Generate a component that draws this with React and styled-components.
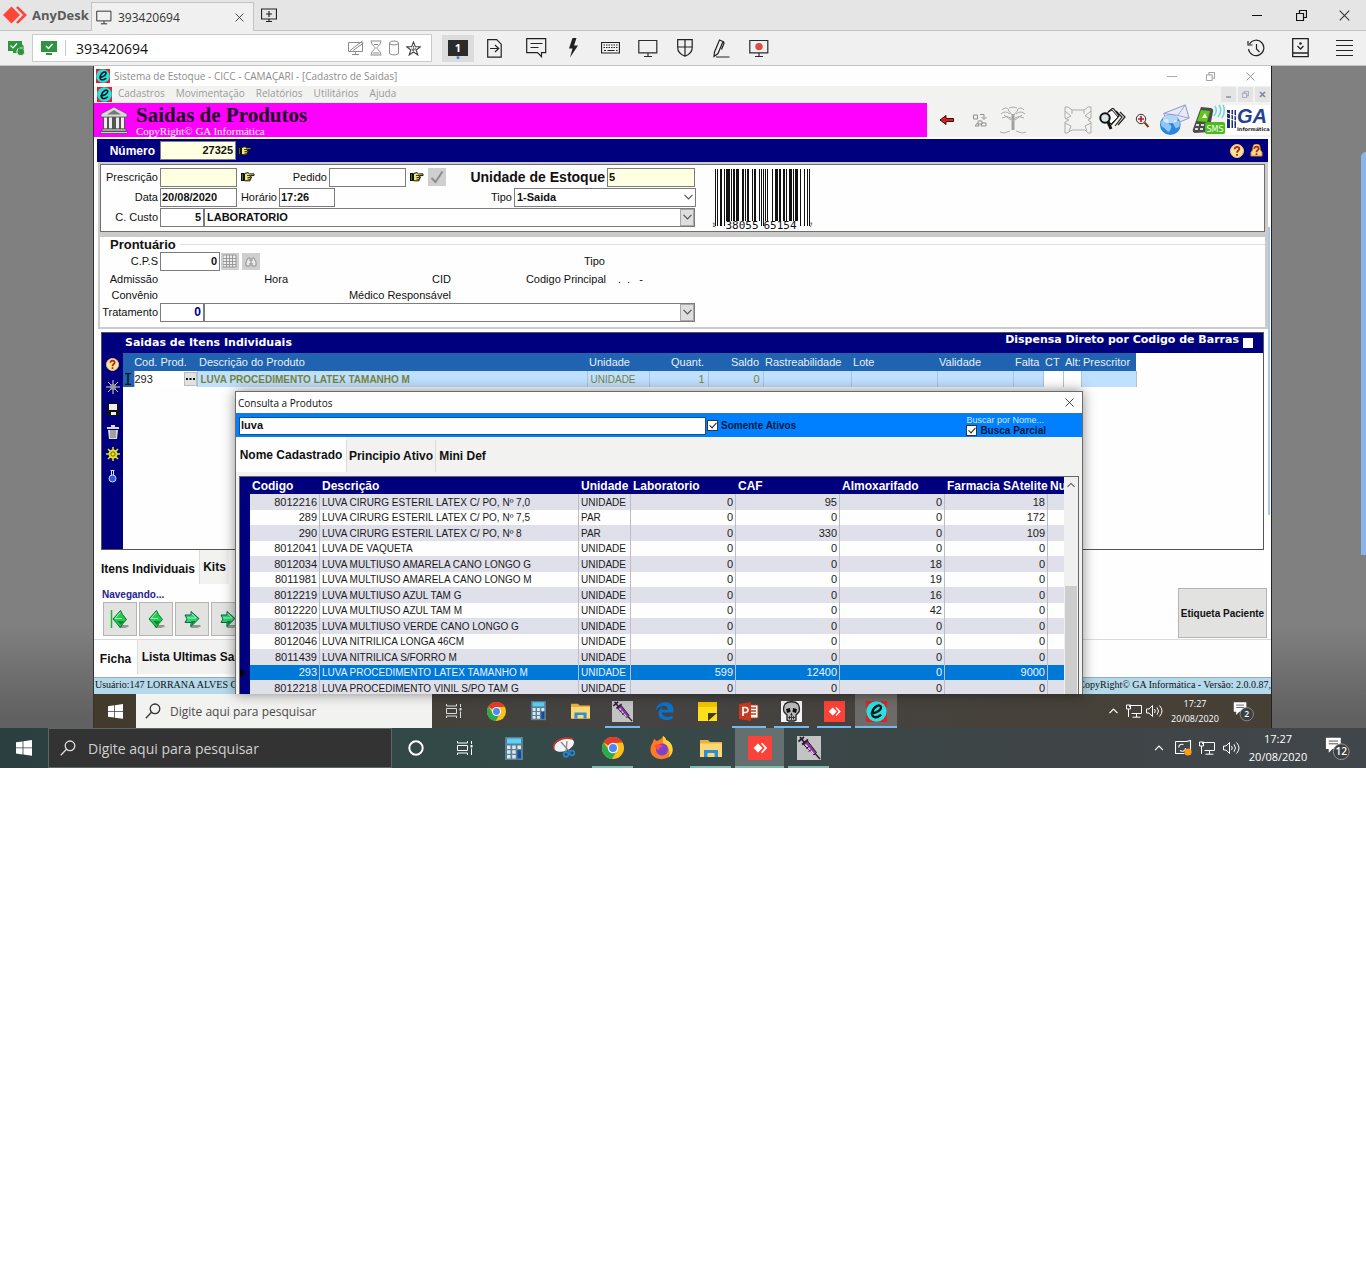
import React from "react";
import styled, { createGlobalStyle, css } from "styled-components";

const UI = '"Open Sans", "Noto Sans", sans-serif';
const SANS = '"Liberation Sans", Arial, sans-serif';
const SERIF = '"Liberation Serif", "Times New Roman", serif';
const WIDE = '"DejaVu Sans", Verdana, sans-serif';
const MONO = '"DejaVu Sans Mono", monospace';

const GlobalStyle = createGlobalStyle`
  *, *::before, *::after { box-sizing: border-box; }
  body { margin: 0; background: #fff; font-family: ${SANS}; font-size: 11px; color: #111; }
  button, input, select { font: inherit; color: inherit; margin: 0; padding: 0; border-radius: 0; }
  button { border: 0; background: none; }
  svg { display: block; flex: none; }
`;

/* ---------- shared pieces ---------- */

const IconButton = styled.button`
  display: flex;
  align-items: center;
  justify-content: center;
  flex: none;
  width: ${(p) => p.$w || 37}px;
  height: ${(p) => p.$h || 27}px;
  background: ${(p) => p.$bg || "transparent"};
`;

const Spacer = styled.div`
  flex: ${(p) => (p.$w ? "none" : 1)};
  width: ${(p) => (p.$w ? p.$w + "px" : "auto")};
`;

function Svg({ w = 16, h = w, vb, children, ...rest }) {
  return (
    <svg width={w} height={h} viewBox={vb || `0 0 ${w} ${h}`} fill="none" aria-hidden="true" {...rest}>
      {children}
    </svg>
  );
}

/* ---------- AnyDesk window ---------- */

const TitleStrip = styled.header`
  display: flex;
  align-items: center;
  height: 31px;
  background: #e5e5e5;
  border-bottom: 1px solid #c3c3c3;
  font-family: ${UI};
`;

const Brand = styled.div`
  display: flex;
  align-items: center;
  gap: 5px;
  width: 91px;
  padding-left: 3px;
  font-weight: 700;
  font-size: 13px;
  color: #5a5a5a;
`;

const SessionTab = styled.div`
  display: flex;
  align-items: center;
  align-self: flex-end;
  gap: 6px;
  width: 163px;
  height: 29px;
  margin-bottom: -1px;
  padding: 0 1px 0 4px;
  background: #f0f0f0;
  border: 1px solid #c3c3c3;
  border-bottom: 0;
  font-size: 12px;
  color: #333;
`;

const ToolStrip = styled.div`
  display: flex;
  align-items: center;
  height: 35px;
  background: #f0f0f0;
  border-bottom: 1px solid #c3c3c3;
  font-family: ${UI};
`;

const AddressBox = styled.div`
  display: flex;
  align-items: center;
  width: 400px;
  height: 28px;
  padding: 0 10px 0 8px;
  gap: 6px;
  background: #fff;
  border: 1px solid #cbcbcb;
`;

const AddressInput = styled.input`
  flex: 1;
  min-width: 0;
  height: 24px;
  padding-left: 4px;
  border: 0;
  background: #fff;
  font-size: 14px;
  color: #111;
`;

const AddressRule = styled.span`
  width: 1px;
  height: 16px;
  margin-left: 2px;
  background: #c8c8c8;
`;

/* ---------- remote stage ---------- */

const Stage = styled.main`
  display: grid;
  grid-template-columns: 94px minmax(0, 1fr) 95px;
  height: 662px;
  background: linear-gradient(#808080 0 560px, #616161 650px);
`;

const Remote = styled.div`
  grid-column: 2;
  display: flex;
  flex-direction: column;
  position: relative;
  min-width: 0;
  background: #fefefe;
  box-shadow: -1px 0 0 #333, 1px 0 0 #222;
`;

const SideHandle = styled.div`
  justify-self: end;
  width: 5px;
  height: 403px;
  margin-top: 86px;
  background: #8ab4ea;
  border-top-left-radius: 5px;
`;

const AppTitle = styled.div`
  display: flex;
  align-items: center;
  height: 20px;
  padding: 0 3px 0 2px;
  gap: 4px;
  font-family: ${UI};
  font-size: 10px;
  color: #8d8d8d;
`;

const MenuBar = styled.nav`
  display: flex;
  align-items: center;
  height: 17px;
  padding-left: 3px;
  gap: 11px;
  background: #f2f2f1;
  font-family: ${UI};
  font-size: 10px;
  line-height: 14px;
  color: #9b9b9b;
  > button { height: 17px; padding-bottom: 3px; }
  > svg + button { margin-left: -5px; }
`;

const MdiButtons = styled.div`
  display: flex;
  gap: 2px;
  margin-left: auto;
  padding-right: 1px;
`;

const BannerRow = styled.div`
  display: flex;
  height: 34px;
  background: #f2f2f1;
`;

const Banner = styled.div`
  display: flex;
  align-items: center;
  flex: 1;
  gap: 8px;
  padding-left: 6px;
  background: #ff00ff;
  font-family: ${SERIF};
  h1 { margin: 0; font-size: 21px; line-height: 21px; font-weight: 700; color: #1c0022; }
  p { margin: 0; font-size: 11px; line-height: 10px; color: #fff; }
`;

const Tools = styled.div`
  display: flex;
  align-items: center;
  width: 344px;
`;

const Body = styled.div`
  display: flex;
  padding-top: 2px;
`;

const BodyMain = styled.div`
  flex: 1;
  min-width: 0;
`;

const EdgeLine = styled.div`
  width: 2px;
  height: 288px;
  margin: 88px 1px 0 0;
  background: #a9c8ef;
`;

const NumberBar = styled.div`
  display: flex;
  align-items: center;
  height: 23px;
  margin-left: 3px;
  padding-right: 3px;
  background: #00007f;
  label { width: 63px; padding-right: 5px; text-align: right; color: #fff; font-weight: 700; font-size: 12px; }
`;

const FormArea = styled.div`
  display: flex;
  flex-direction: column;
  gap: 5px;
  margin-left: 4px;
  padding: 2px 3px 2px 2px;
  background: #cbcbca;
`;

const Panel = styled.div`
  display: flex;
  height: 68px;
  padding-top: 2px;
  gap: 15px;
  border: 1px solid #6f6f6f;
  background: #fefefe;
`;

const Group = styled.fieldset`
  height: 90px;
  min-width: 0;
  margin: 0;
  padding: 0 0 0 1px;
  border: 0;
  background: #fefefe;
  legend {
    float: left;
    display: flex;
    align-items: center;
    width: 100%;
    height: 15px;
    padding: 0 0 0 9px;
    gap: 4px;
    font-weight: 700;
    font-size: 13px;
    line-height: 15px;
  }
  legend::after { content: ""; flex: 1; height: 1px; background: #e0e0e0; }
`;

const FormRows = styled.div`
  clear: both;
  width: 596px;
`;

const FormRow = styled.div`
  display: flex;
  align-items: center;
  height: ${(p) => p.$h || 20}px;
`;

const labelStyle = css`
  flex: none;
  width: ${(p) => p.$w || 59}px;
  padding-right: 2px;
  text-align: right;
  white-space: nowrap;
  font-weight: ${(p) => (p.$big ? 700 : 400)};
  font-size: ${(p) => (p.$big ? 14 : 11)}px;
`;
const Label = styled.label`${labelStyle}`;
const Caption = styled.span`${labelStyle}`;

const Field = styled.input`
  flex: none;
  width: ${(p) => p.$w}px;
  height: 19px;
  padding: 0 ${(p) => (p.$right ? 2 : 1)}px 1px;
  border: 1px solid #7c7c7c;
  background: ${(p) => (p.$cream ? "#ffffe1" : "#fff")};
  text-align: ${(p) => (p.$right ? "right" : "left")};
  font-weight: 700;
  font-size: ${(p) => (p.$size || 11)}px;
  color: ${(p) => p.$color || "#111"};
`;

const SelectWrap = styled.div`
  display: flex;
  position: relative;
  width: ${(p) => p.$w}px;
  height: 19px;
  select {
    flex: 1;
    appearance: none;
    padding: 0 2px;
    border: 1px solid #7c7c7c;
    background: #fff;
    font-weight: 700;
    outline: 0;
  }
`;

const SelectArrow = styled.span`
  position: absolute;
  right: 1px;
  top: 1px;
  bottom: 1px;
  display: flex;
  align-items: center;
  justify-content: center;
  width: 14px;
  background: ${(p) => (p.$plain ? "#fff" : "#dedede")};
  border: ${(p) => (p.$plain ? "0" : "1px solid #a8a8a8")};
  pointer-events: none;
`;

/* ---------- items panel ---------- */

const Items = styled.section`
  display: grid;
  grid-template: 20px 1fr / 21px minmax(0, 1fr);
  height: 218px;
  margin: 3px 4px 0 7px;
  border: 1px solid #555;
  background: #00007f;
`;

const ItemsTitle = styled.div`
  grid-column: 2;
  display: flex;
  justify-content: space-between;
  padding-right: 10px;
  font-family: ${WIDE};
  font-size: 11px;
  font-weight: 700;
  line-height: 20px;
  color: #fff;
  h2 { margin: 0; padding-left: 2px; font-size: 11px; }
  label { display: flex; gap: 4px; line-height: 14px; align-items: center; height: 14px; }
  input { appearance: none; width: 10px; height: 10px; margin-top: 5px; background: #fff; }
`;

const SideTools = styled.div`
  display: flex;
  flex-direction: column;
  align-items: center;
`;

const ItemsBody = styled.div`
  background: #fefefe;
`;

const ItemsTable = styled.table`
  width: 1013px;
  border-collapse: collapse;
  table-layout: fixed;
  th { height: 18px; padding: 0 3px; background: #2063b0; color: #e6f1fc; font-weight: 400; text-align: left; white-space: nowrap; overflow: hidden; }
  td { height: 16px; padding: 0 3px; background: #c0e0ff; border-right: 1px solid #a9c4de; color: #76853a; line-height: 15px; white-space: nowrap; }
`;

const ItemTh = styled.th`
  && { text-align: ${(p) => (p.$num ? "right" : "left")}; padding: 0 ${(p) => (p.$num ? 4 : 2)}px; }
`;

const CodeCell = styled.div`
  display: flex;
  justify-content: space-between;
  align-items: center;
  color: #222;
  button { display: flex; align-items: center; justify-content: center; width: 13px; height: 14px; background: #e2e2e2; border: 1px solid #bbb; }
`;

const ItemTd = styled.td`
  text-align: ${(p) => (p.$num ? "right" : "left")};
  font-weight: ${(p) => (p.$bold ? 700 : 400)};
  font-size: ${(p) => (p.$small ? 10 : 11)}px;
  && { background: ${(p) => p.$bg || "#c0e0ff"}; padding: 0 ${(p) => (p.$flush ? 0 : 3)}px; }
`;

const TabRow = styled.div`
  display: flex;
  align-items: ${(p) => (p.$end ? "flex-end" : "flex-start")};
  height: ${(p) => p.$h}px;
  margin-left: ${(p) => p.$left || 0}px;
`;

const Tab = styled.button`
  display: flex;
  align-items: center;
  justify-content: center;
  width: ${(p) => p.$w}px;
  height: ${(p) => (p.$on ? "100%" : "calc(100% - 3px)")};
  background: ${(p) => (p.$on ? "#fefefe" : "#f2f2f1")};
  border-left: ${(p) => (p.$on ? "0" : "1px solid #dcdcdc")};
  font-weight: 700;
  font-size: 12px;
  white-space: nowrap;
`;

const NavBlock = styled.div`
  display: flex;
  justify-content: space-between;
  height: 53px;
  padding: 1px 4px 0 8px;
  border-bottom: 1px solid #dadada;
`;

const NavTitle = styled.div`
  font-size: 10px;
  font-weight: 700;
  line-height: 14px;
  color: #24248c;
`;

const NavButtons = styled.div`
  display: flex;
  gap: 2px;
  padding-left: 1px;
`;

const NavButton = styled.button`
  display: flex;
  align-items: center;
  justify-content: center;
  width: 34px;
  height: 34px;
  background: #e2e2e1;
  border: 1px solid #b4b4b4;
`;

const LabelButton = styled.button`
  width: 89px;
  height: 50px;
  background: #e2e2e1;
  border: 1px solid #b4b4b4;
  font-size: 10px;
  font-weight: 700;
  white-space: nowrap;
`;

const StatusBar = styled.div`
  display: flex;
  justify-content: space-between;
  height: 17px;
  padding-left: 1px;
  background: #b4d9ea;
  border-top: 1px solid #9ab;
  font-family: ${SERIF};
  font-size: 10px;
  line-height: 14px;
  white-space: nowrap;
  overflow: hidden;
`;

/* ---------- search dialog ---------- */

const Dialog = styled.section`
  position: absolute;
  left: 141px;
  top: 325px;
  width: 848px;
  height: 303px;
  display: flex;
  flex-direction: column;
  overflow: hidden;
  background: #f2f2f1;
  border: 1px solid #6b6b6b;
  border-bottom: 0;
`;

const DialogShadow = styled.div`
  position: absolute;
  left: 141px;
  top: 325px;
  width: 848px;
  height: 303px;
  box-shadow: 0 0 12px rgba(0, 0, 0, 0.45);
`;

const DialogTitle = styled.div`
  display: flex;
  align-items: center;
  justify-content: space-between;
  height: 21px;
  padding-left: 2px;
  background: #fefefe;
  font-family: ${UI};
  font-size: 10px;
`;

const SearchBar = styled.div`
  display: flex;
  align-items: center;
  height: 24px;
  padding: 0 36px 0 3px;
  gap: 1px;
  background: #0080ff;
  border-top: 1px solid #2a78b8;
  input[type="text"] { width: 467px; height: 18px; padding: 0 0 1px 1px; border: 1px solid #14508c; background: #fff; font-weight: 700; }
`;

const CheckLabel = styled.label`
  display: flex;
  align-items: center;
  gap: 3px;
  font-size: 10px;
  line-height: 11px;
  font-weight: 700;
  color: #001a3c;
`;

const CheckBox = styled.input.attrs({ type: "checkbox" })`
  appearance: none;
  display: flex;
  justify-content: center;
  width: 11px;
  height: 11px;
  background: #fff;
  border: 1px solid #333;
  &:checked::after {
    content: "";
    width: 4px;
    height: 7px;
    border: solid #222;
    border-width: 0 1px 1px 0;
    transform: rotate(42deg);
  }
`;

const PartialSearch = styled.div`
  margin-left: auto;
  font-size: 9px;
  line-height: 10px;
  color: #cfe6ff;
`;

const TableFrame = styled.div`
  display: flex;
  flex: 1;
  min-height: 0;
  margin: 4px 3px 0 3px;
  border: 1px solid #666;
  border-bottom: 0;
`;

const ProductTable = styled.table`
  width: 824px;
  flex: none;
  align-self: flex-start;
  border-collapse: separate;
  border-spacing: 0;
  table-layout: fixed;
  th {
    height: 17px;
    padding: 0 0 0 2px;
    background: #00007f;
    color: #fff;
    font-size: 12px;
    line-height: 16px;
    text-align: left;
    white-space: nowrap;
    overflow: hidden;
  }
  td { padding: 0 2px; border-right: 1px solid #bdbdc6; line-height: 15px; white-space: nowrap; overflow: hidden; }
`;

const ProductRow = styled.tr`
  height: 15px;
  background: #fefefe;
  color: #1a1a1a;
  &:nth-child(odd) { height: 16px; background: #e0e0ea; }
  ${(p) => p.$on && css`&& { background: #0078d7; color: #e8f3ff; }`}
  td:first-child { background: #00007f; border: 0; padding: 0; }
  td:last-child { border: 0; }
`;

const NumCell = styled.td`
  text-align: right;
`;
const TextCell = styled.td`
  font-size: 10px;
`;

const ScrollTrack = styled.div`
  display: flex;
  flex-direction: column;
  flex: 1;
  background: #f0f0f0;
`;
const ScrollThumb = styled.div`
  flex: 1;
  margin: 93px 1px 0;
  background: #cdcdcd;
`;

/* ---------- taskbars ---------- */

const TaskBar = styled.footer`
  display: flex;
  align-items: stretch;
  height: ${(p) => (p.$small ? 34 : 40)}px;
  margin-top: ${(p) => (p.$small ? "auto" : 0)};
  background: ${(p) => (p.$small ? "linear-gradient(90deg, #423b2c 0, #454443 45%, #463f35 100%)" : "linear-gradient(90deg, #2c3f40 0, #344a49 38%, #3f4547 75%, #404649 100%)")};
  color: #fff;
  font-family: ${UI};
  padding-right: ${(p) => (p.$small ? 9 : 4)}px;
`;

const SearchField = styled.label`
  display: flex;
  align-items: center;
  gap: ${(p) => (p.$small ? 9 : 12)}px;
  width: ${(p) => (p.$small ? 296 : 344)}px;
  padding-left: ${(p) => (p.$small ? 9 : 11)}px;
  background: ${(p) => (p.$small ? "#f2f2f0" : "#333")};
  border: ${(p) => (p.$small ? "0" : "1px solid #5d6666")};
  input {
    flex: 1;
    min-width: 0;
    border: 0;
    outline: 0;
    background: transparent;
    font-size: ${(p) => (p.$small ? 12 : 14)}px;
  }
  input::placeholder { color: ${(p) => (p.$small ? "#4a4a4a" : "#d0d0d0")}; opacity: 1; }
`;

const TaskItem = styled.button`
  display: flex;
  flex-direction: column;
  align-items: center;
  justify-content: center;
  flex: none;
  width: ${(p) => p.$w}px;
  padding-top: 2px;
  background: ${(p) => (p.$on ? "rgba(255,255,255,0.22)" : "transparent")};
  > svg { margin: auto; }
  &::after {
    content: "";
    width: calc(100% - ${(p) => (p.$on ? 0 : 8)}px);
    height: 2px;
    background: ${(p) => p.$open || "transparent"};
  }
`;

const Clock = styled.time`
  display: flex;
  flex-direction: column;
  justify-content: center;
  align-items: center;
  width: ${(p) => (p.$small ? 60 : 70)}px;
  font-size: ${(p) => (p.$small ? 9 : 11)}px;
  line-height: ${(p) => (p.$small ? 15 : 18)}px;
`;

/* ---------- icons ---------- */

const Close = ({ s = 11, c = "#333" }) => (
  <Svg w={s} vb="0 0 11 11"><path d="M.7.7l9.6 9.6M10.3.7L.7 10.3" stroke={c} strokeWidth="1.1" /></Svg>
);
const Restore = ({ c = "#111", s = 11 }) => (
  <Svg w={s} vb="0 0 11 11"><path d="M.5 3.5h7v7h-7zM3.5 3V.5h7v7H8" stroke={c} strokeWidth="1.2" /></Svg>
);
const Minimize = ({ c = "#111" }) => <Svg w={10} h={10}><path d="M0 5.5h10" stroke={c} /></Svg>;
const Monitor = ({ w = 19, red }) => (
  <Svg w={w} h={w - 1} vb="0 0 20 19">
    <path d="M.8 1.5h18v12.300h-18zM10 14v3.500M6 17.500h8" stroke="#2b2b2b" strokeWidth="1.200" />
    {red && <circle cx="10" cy="7.600" r="3.700" fill="#dd4b45" />}
  </Svg>
);
const Diamond = ({ s = 24, c = "#ff4438" }) => (
  <Svg w={s} h={(s * 18) / 24} vb="0 0 24 18">
    <path d="M8.500 0.500L17 9l-8.500 8.500L0 9z" fill={c} />
    <path d="M13 1.800l2-1.500L24 9l-9 8.700-2-1.500L20 9z" fill={c} />
  </Svg>
);
const Chevron = ({ up, c = "#555", w = 9 }) => (
  <Svg w={w} h={6} vb="0 0 9 6"><path d={up ? "M.5 5.200l4-4 4 4" : "M.5.8l4 4 4-4"} stroke={c} strokeWidth="1.200" /></Svg>
);
const SearchIcon = ({ c }) => (
  <Svg w={16}><circle cx="10" cy="5.800" r="4.800" stroke={c} strokeWidth="1.300" /><path d="M6.500 9.300L.8 15.200" stroke={c} strokeWidth="1.300" /></Svg>
);
const AppE = ({ s = 15 }) => (
  <Svg w={s} vb="0 0 20 20">
    <rect width="20" height="20" fill="#d9242a" /><circle cx="10" cy="10" r="9.700" fill="#22e4e4" />
    <path d="M4.500 11.800C9 12 14.500 9 14.300 5.800 14 2.500 7.500 4.500 6 10.500c-1.200 5.500 4 6.500 8.500 2.500" stroke="#141414" strokeWidth="2.200" />
  </Svg>
);
const Temple = () => (
  <Svg w={28} h={27} vb="0 0 28 27">
    <path d="M14 0L1 7v3h26V7z" fill="#d8d8d8" stroke="#555" strokeWidth=".7" /><path d="M14 3L7 7.500h14z" fill="#777" />
    <path d="M3 10h22v12H3z" fill="#555" />
    <path d="M4 10.500h3v11H4zM9 10.500h3v11H9zM16 10.500h3v11h-3zM21 10.500h3v11h-3z" fill="#ededed" />
    <path d="M2 22h24v2H2zM.5 24.500h27v2H.5z" fill="#cfcfcf" stroke="#444" strokeWidth=".7" />
  </Svg>
);
const Hand = () => (
  <Svg w={14} h={10} vb="0 0 14 10">
    <path d="M0 1h3v8H0z" fill="#111" /><path d="M1 2h1v6H1z" fill="#2d7a31" />
    <path d="M3.500 1.500L7 .6l1.500 1.300H13v1.700H9.300v1.200h1v1.300h-.6v1.200H9v1.500H3.500z" fill="#f2e66b" stroke="#111" />
    <path d="M6 3.500h3M6.500 5.500h3M6.500 7.200H9" stroke="#111" strokeWidth=".8" />
  </Svg>
);
const Help = ({ s = 14, lock }) => (
  <Svg w={s} vb="0 0 14 14">
    {lock ? <path d="M3 6V4a4 4 0 018 0v2l2 3v4H1V9z" fill="#f5d98a" stroke="#b8862c" /> : <circle cx="7" cy="7" r="6.500" fill="#fbe59a" stroke="#f7c46c" />}
    <path d="M4.700 5.200C4.700 2 9.600 2.300 9.300 5 9.100 6.600 7 6.700 7 8.800M7 10v1.800" stroke="#b92018" strokeWidth="1.900" />
  </Svg>
);
const Win = ({ s = 16 }) => (
  <Svg w={s} vb="0 0 16 16"><path d="M0 2.300l6.600-.9v6.100H0zM7.400 1.300L16 .1v7.400H7.400zM0 8.300h6.600v6.200L0 13.600zM7.400 8.300H16v7.500l-8.600-1.200z" fill="#fff" /></Svg>
);
const TaskView = ({ c = "#fff" }) => (
  <Svg w={16} h={14}><path d="M.5 0v2h10V0M.5 14v-2h10v2M.5 4.500h10v5H.5zM14.500 0v3M14.500 7.500V14" stroke={c} /><path d="M13.500 4h2v2.500h-2z" fill={c} /></Svg>
);
const Chrome = ({ s = 20 }) => (
  <Svg w={s} vb="0 0 22 22">
    <circle cx="11" cy="11" r="11" fill="#fbc116" />
    <path d="M11 11L1.400 5.600A11 11 0 0120.600 5.600L11 6z" fill="#e33b2e" /><path d="M1.400 5.600A11 11 0 0010 22l5-8.600-8.500-1z" fill="#2da94f" />
    <circle cx="11" cy="11" r="5.200" fill="#fff" /><circle cx="11" cy="11" r="4" fill="#4a8af4" />
  </Svg>
);
const Calc = ({ s = 18 }) => (
  <Svg w={s} h={(s * 23) / 18} vb="0 0 18 23">
    <rect width="18" height="23" fill="#5d7f95" /><path d="M2 1.500h14v5H2z" fill="#5ad2f5" />
    <path d="M2 8.500h3.500V12H2zM7.200 8.500h3.500V12H7.200zM12.400 8.500H16V12h-3.600zM2 13.300h3.500v3.400H2zM7.200 13.300h3.500v3.400H7.200zM2 18h3.500v3.400H2zM7.200 18h3.500v3.400H7.200z" fill="#dce6ee" />
    <path d="M12.400 13.300H16v8.100h-3.600z" fill="#0d4f9e" />
  </Svg>
);
const Folder = ({ s = 20 }) => (
  <Svg w={s} h={(s * 18) / 22} vb="0 0 22 18">
    <path d="M0 1h8l2 2h12v15H0z" fill="#e9b13b" /><path d="M0 4.500h22V18H0z" fill="#fbd877" />
    <path d="M4 18v-7h14v7h-3.500v-4h-7v4z" fill="#2f8fd4" />
  </Svg>
);
const Syringe = ({ s = 22 }) => (
  <Svg w={s} vb="0 0 24 24">
    <rect width="24" height="24" fill="#c3c3c3" />
    <path d="M3 1l4 5M1.500 5.500L7 1M5 8.500L11 3.500" stroke="#2b1c2e" strokeWidth="1.700" />
    <path d="M6.500 8.500l4-3.500 9 11.500-2.500 2.500z" fill="#8a3a9e" stroke="#2b1236" />
    <path d="M8.500 8.500l8 9.500" stroke="#f0d5f5" strokeWidth="1.300" /><path d="M9 12.500l3-2M11.500 15.500l3-2" stroke="#2b1236" />
    <path d="M18.500 18l4.500 5" stroke="#222" strokeWidth="1.500" />
  </Svg>
);
const EdgeIcon = () => (
  <Svg w={18} vb="0 0 18 18"><path d="M0 8C1-2 17-3 17.500 8v2.500H6c.3 5 7 5.300 10.500 3v3.300C8 20.500 1.500 16 2.500 10.500 3 8 4.500 6 7 5 6 6 5.800 7 5.800 7.700h6C12 2 4 3 0 8z" fill="#0a72c8" /></Svg>
);
const Note = () => <Svg w={19}><path d="M0 0h19v19H0z" fill="#ffdf1a" /><path d="M0 0h19v5H0z" fill="#f2c500" /><path d="M10 19v-8h9z" fill="#3d3a26" /></Svg>;
const Ppt = () => (
  <Svg w={20} h={19}>
    <path d="M10 3h9v13h-9z" fill="#fff" stroke="#c8391d" /><path d="M12 6h5M12 9h5M12 12h5" stroke="#c8391d" strokeWidth="1.500" /><path d="M0 2l12-2v19L0 17z" fill="#c8391d" />
    <path d="M4 14V5.500h2.500a2.300 2.300 0 010 5H4" stroke="#fff" strokeWidth="1.700" />
  </Svg>
);
const Skull = () => (
  <Svg w={21}>
    <path d="M0 0h21v21H0z" fill="#f4f4f4" /><path d="M4 3c3-3 10-3 13 0 2 3 2 7 0 9l-2 2v5l-2 1H8l-2-1v-5l-2-2C2 10 2 6 4 3z" fill="#b9b9b9" stroke="#222" strokeWidth="1.300" />
    <path d="M5 8l4-1 .5 4L6 12zM16 8l-4-1-.5 4 3.500 1z" fill="#111" /><path d="M10.500 11.500l-1.200 3h2.400z" fill="#111" /><path d="M7 16.500h7M8.500 15v3.500M10.500 15v4M12.500 15v3.500" stroke="#222" strokeWidth=".8" />
  </Svg>
);
const AnyTile = ({ s = 22 }) => (
  <Svg w={s} vb="0 0 24 24"><path d="M0 0h24v24H0z" fill="#fb4238" /><path d="M10 7.500l4.500 4.500-4.500 4.500L5.500 12zM13 7.800l1.200-1 5 5.200-5 5.200-1.200-1 3.800-4.200z" fill="#fff" /></Svg>
);
const Snip = () => (
  <Svg w={24} h={22}>
    <ellipse cx="12" cy="8" rx="10.500" ry="6" transform="rotate(-22 12 8)" fill="#f4f4f4" /><path d="M2 12C0 5 10-1 21 2" stroke="#c8342c" strokeWidth="1.600" />
    <path d="M9 5l8 9M15 4l-1 11" stroke="#888" strokeWidth="1.300" /><circle cx="14" cy="17.500" r="2.300" stroke="#2386d4" strokeWidth="1.700" /><circle cx="20" cy="16" r="2.300" stroke="#2386d4" strokeWidth="1.700" />
  </Svg>
);
const Firefox = () => (
  <Svg w={23} h={24}>
    <path d="M3 6c0-2 1-3 2-3 0 1 1 2 2 2C10 3 11 4 13 0c2 1 3 3 3 4 5 2 7 6 6.500 11C21 26 1 26 .5 14 .3 10 2 8 3 6z" fill="#ff7a26" />
    <path d="M13 0c2 1 3 3 3 4 5 2 7 6 6.500 11-.5 3-2 5-4 6.500C21 16 19 9 13 7z" fill="#ffd43a" /><circle cx="12" cy="13.500" r="6" fill="#7b41d0" /><path d="M5 9c4-2 7 0 8 2-3 0-4 1-4 3-2 0-4-2-4-5z" fill="#ff4c46" />
  </Svg>
);
const Net = () => <Svg w={16} h={14}><path d="M3.500 3V1.500h12v8h-10M10.500 10v3M6.500 13.200h8M.5 1h4v4h-4zM2.500 5v8" stroke="#fff" /></Svg>;
const Sound = () => <Svg w={17} h={14}><path d="M.5 5h2.500l3.500-3.500v11L3 9H.5zM8.500 5q1.500 2 0 4M11 3.300q3 3.700 0 7.400M13.500 1.500q5 5.500 0 11" stroke="#fff" /></Svg>;
const Sync = () => (
  <Svg w={17} h={16}><path d="M.5 1.500h11M.5 1.500v12h9M11.500 1.500l4-1v12h-2M8.500 4.500c-3-1-5 1-4.500 3M10.500 8c0 3-3 4-5.500 2.500" stroke="#fff" strokeWidth="1.100" /><circle cx="13" cy="12" r="3.600" fill="#ff9c12" /></Svg>
);
const Notice = ({ n, s = 26 }) => (
  <Svg w={s} vb="0 0 28 26">
    <path d="M1 2h16v12H8l-4 4v-4H1z" fill="#fff" /><path d="M4 5.500h10M4 8.500h10" stroke="#444" />
    <circle cx="17.500" cy="17" r="8.500" fill="#3c4043" stroke="#9a9a9a" />
    <text x="17.500" y="21" textAnchor="middle" fill="#fff" fontSize="11" fontFamily={UI} fontWeight="600">{n}</text>
  </Svg>
);
const Sphere = () => (
  <Svg w={32} h={32} vb="0 0 34 34">
    <path d="M5 10L28 1l4 14-22 9z" fill="#e7e9fa" stroke="#8c92c4" /><path d="M5 10l15 2L28 1M32 15L19 12" stroke="#9aa0d0" />
    <circle cx="12" cy="22" r="11" fill="#2d86de" /><path d="M2 19c4-5 9-3 8 0s4 2 3 6-3 6-5 3-5-3-6-6zM16 17l6 1v6l-4 2-3-5z" fill="#8fc6f5" /><ellipse cx="12" cy="16" rx="8" ry="4.500" fill="#fff" opacity=".65" />
  </Svg>
);
const Phone = () => (
  <Svg w={34} h={32} vb="0 0 34 32">
    <path d="M22 12q4-5 1-10M26 13q5-6 1-12M30 14q4-7 1-13" stroke="#6fd6e0" strokeWidth="1.500" />
    <path d="M9 3l10 1q3 1 2 4l-4 20-14 1q-3-1-2-4z" fill="#4a4d4a" /><path d="M9 6l9 1-3 11-10-1z" fill="#63c51c" /><path d="M10 14l3-5 2 5z" fill="#fff" />
    <path d="M4 20h3v2H4zM9 20h3v2H9zM3 24h3v2H3zM8 24h3v2H8z" fill="#ddd" /><rect x="13" y="18" width="20" height="12" rx="2" fill="#4cba1e" />
    <text x="23" y="27.500" fontSize="8" fontFamily={WIDE} textAnchor="middle" fill="#fff">SMS</text>
  </Svg>
);
const GaLogo = () => (
  <Svg w={44} h={30} vb="0 0 44 30">
    <path d="M0 0h44v30H0z" fill="#fff" /><path d="M1 5h3v18H1zM5.500 5H7v18H5.500zM8.500 5H10v18H8.500z" fill="#1c2b78" /><path d="M1 8l9 3M1 13l9 3" stroke="#fff" />
    <text x="11" y="18" fontFamily={SANS} fontWeight="700" fontStyle="italic" fontSize="20" fill="#24418f">GA</text>
    <text x="11" y="26" fontFamily={WIDE} fontSize="5" fontWeight="700" fill="#222">Informática</text>
  </Svg>
);
const TreeIcon = () => (
  <Svg w={26} h={28} vb="0 0 26 28">
    <path d="M11.500 8h3v16h-3z" fill="#a2a2a2" />
    <path d="M2 4q4-4 7 0M9 2q4-2 8 0M17 4q4-4 7 0M1 8q4-4 9 0M16 8q5-4 9 0M2 12q5-3 9 0l2 3 2-3q4-3 9 0M4 9l7 5M22 9l-7 5M8 4l5 6 5-6M0 26l4 1 6-2M16 25l6 2 4-1" stroke="#ababab" />
  </Svg>
);
const BoxIcon = () => (
  <Svg w={28}><path d="M1 1h3l4 3h12l4-3h3v11l-3 2 3 2v11h-3l-3-3H8l-5 3H1V16l4-2-4-2zM1 5l6 5-6 3M27 5l-6 5 6 3M8 4v4M20 4v4M1 17l6 3-2 5M27 17l-6 3 2 5" stroke="#ababab" /></Svg>
);
const Papers = () => (
  <Svg w={27} h={24}>
    <path d="M9 4l5-4 6 8-8 9M17 3l6 6-7 9M21 4l5 5-7 8" stroke="#222" strokeWidth="1.200" /><path d="M5 7l8-5 6 7-7 7z" fill="#fff" stroke="#222" />
    <circle cx="6" cy="10" r="4.700" fill="#d8e4e8" stroke="#111" strokeWidth="2" /><path d="M9 14l3 7" stroke="#111" strokeWidth="3" />
  </Svg>
);
const Zoom = () => <Svg w={15}><circle cx="6" cy="6" r="4.700" fill="#eee" stroke="#333" /><path d="M6 3v6M3 6h6" stroke="#c01c1c" strokeWidth="1.700" /><path d="M9.500 9.500l4 4.500" stroke="#7a3d12" strokeWidth="2" /></Svg>;
const Grid = () => <Svg w={14}><path d="M0 1h13v12H0z" fill="#eee" stroke="#999" /><path d="M0 4.500h13M0 7.500h13M0 10.500h13M3.500 1v12M6.500 1v12M9.500 1v12" stroke="#999" /></Svg>;
const Binoculars = () => <Svg w={12} h={11}><path d="M1 10V6l2-4h2v3h2V2h2l2 4v4H7V7H5v3z" fill="#e9e9e9" stroke="#909090" /></Svg>;

function NavArrow({ left, bar }) {
  return (
    <Svg w={20} h={20}>
      <path d="M8 16h10l1 1.500-4 1.500H9z" fill="#8f9a90" />
      {left ? (
        <path d="M10.500 1.500L3 10l7.500 8.500 2-3.500 4-4.500-4-5z" fill="#1fcf4a" stroke="#0b6e33" />
      ) : (
        <path d="M9 2.500l8 7-8 8v-4H3l2-3.500-2-4h6z" fill="#2fce72" stroke="#0b6440" />
      )}
      <path d={left ? "M10.500 3L5 9.500h7" : "M9.700 4.500l4.500 4.500H5"} stroke="#a6f7bd" />
      <path d={left ? "M7 12h7l-3 4z" : "M9 12h5l-4 4z"} fill="#0a8a35" />
      {bar && <path d={left ? "M1.500 1v18" : "M18.500 1v18"} stroke="#18b52c" strokeWidth="1.500" />}
    </Svg>
  );
}

const L_CODES = ["0001101", "0011001", "0010011", "0111101", "0100011", "0110001", "0101111", "0111011", "0110111", "0001011"];

function Barcode({ digits }) {
  const flip = (s) => s.replace(/./g, (b) => (b === "1" ? "0" : "1"));
  const left = digits.slice(0, 6).split("").map((d) => L_CODES[d]).join("");
  const right = digits.slice(6).split("").map((d) => flip(L_CODES[d])).join("");
  const bits = `101${left}01010${right}101`;
  return (
    <Svg w={101} h={64}>
      {bits.split("").map((b, i) => {
        const tall = i < 10 || i > 84 || (i > 44 && i < 50);
        return b === "1" ? <rect key={i} x={i + 3} y={2} width={1} height={tall ? 57 : 52} fill="#111" /> : null;
      })}
      <g fontFamily={MONO} fontSize="11" fill="#111">
        <text x="0" y="60" fontSize="6">1</text>
        <text x="30" y="62" textAnchor="middle">38055</text>
        <text x="68" y="62" textAnchor="middle">65154</text>
        <text x="97" y="60" fontSize="6">7</text>
      </g>
    </Svg>
  );
}

/* ---------- data ---------- */

const PRODUCTS = [
  ["8012216", "LUVA CIRURG ESTERIL LATEX C/ PO, Nº 7,0", "UNIDADE", 0, 95, 0, 18],
  ["289", "LUVA CIRURG ESTERIL LATEX C/ PO, Nº 7,5", "PAR", 0, 0, 0, 172],
  ["290", "LUVA CIRURG ESTERIL LATEX C/ PO, Nº 8", "PAR", 0, 330, 0, 109],
  ["8012041", "LUVA DE VAQUETA", "UNIDADE", 0, 0, 0, 0],
  ["8012034", "LUVA MULTIUSO AMARELA CANO LONGO G", "UNIDADE", 0, 0, 18, 0],
  ["8011981", "LUVA MULTIUSO AMARELA CANO LONGO M", "UNIDADE", 0, 0, 19, 0],
  ["8012219", "LUVA MULTIUSO AZUL TAM G", "UNIDADE", 0, 0, 16, 0],
  ["8012220", "LUVA MULTIUSO AZUL TAM M", "UNIDADE", 0, 0, 42, 0],
  ["8012035", "LUVA MULTIUSO VERDE CANO LONGO G", "UNIDADE", 0, 0, 0, 0],
  ["8012046", "LUVA NITRILICA LONGA 46CM", "UNIDADE", 0, 0, 0, 0],
  ["8011439", "LUVA NITRILICA S/FORRO M", "UNIDADE", 0, 0, 0, 0],
  ["293", "LUVA PROCEDIMENTO LATEX TAMANHO M", "UNIDADE", 599, 12400, 0, 9000],
  ["8012218", "LUVA PROCEDIMENTO VINIL S/PO TAM G", "UNIDADE", 0, 0, 0, 0],
];
const SELECTED = "293";

/* ---------- sections ---------- */

function AnyDeskChrome() {
  return (
    <>
      <TitleStrip>
        <Brand><Diamond />AnyDesk</Brand>
        <SessionTab>
          <Monitor w={16} />
          393420694
          <Spacer />
          <IconButton $w={26} aria-label="Fechar aba"><Close s={9} /></IconButton>
        </SessionTab>
        <IconButton $w={30} aria-label="Nova aba">
          <Svg w={16} h={14}><path d="M.5 1h15v10H.5zM8 3v6M5 6h6M5 13.500h6M8 11v2" stroke="#222" strokeWidth="1.200" /></Svg>
        </IconButton>
        <Spacer />
        <IconButton $w={45} aria-label="Minimizar"><Minimize /></IconButton>
        <IconButton $w={44} aria-label="Restaurar"><Restore /></IconButton>
        <IconButton $w={43} aria-label="Fechar"><Close /></IconButton>
      </TitleStrip>
      <ToolStrip>
        <IconButton $w={32} aria-label="Permissões">
          <Svg w={17} h={15}>
            <path d="M0 0h14v10H0zM5 10h4v2H5z" fill="#2e9440" /><path d="M2.500 4.500l2.500 2.500 4-4.500" stroke="#fff" strokeWidth="1.200" />
            <rect x="9" y="7" width="7.500" height="7.500" rx="3" fill="#2e9440" stroke="#f0f0f0" /><path d="M11 8V6a2 2 0 014 0v2" stroke="#2e9440" strokeWidth="1.300" />
          </Svg>
        </IconButton>
        <AddressBox>
          <Svg w={16} h={14}><path d="M0 0h16v11H0zM5 12h6v2H5z" fill="#2e9440" /><path d="M5 5l2.500 2.500L11.500 3" stroke="#fff" strokeWidth="1.300" /></Svg>
          <AddressRule />
          <AddressInput aria-label="Endereço remoto" defaultValue="393420694" />
          <Svg w={16}><path d="M.5 2.500h14v9H.5zM7.500 12v2.500M4 14.500h7M2 10.500L14.500 1M5 10.500L15.500 3" stroke="#8a8a8a" /></Svg>
          <Svg w={12} h={16}><path d="M.5 1h11M.5 15h11M1.500 1.500C1.500 6 5 6 5 8s-3.500 2-3.500 6.500M10.500 1.500C10.500 6 7 6 7 8s3.500 2 3.500 6.500M4 4.500h4M3 13h6" stroke="#8a8a8a" /></Svg>
          <Svg w={12} h={16}><ellipse cx="6" cy="3" rx="4.500" ry="2" stroke="#8a8a8a" /><path d="M1.500 3v10c0 2.500 9 2.500 9 0V3" stroke="#8a8a8a" /></Svg>
          <Svg w={15}><path d="M7.500 1l1.800 4.800h5L10.200 9l1.600 5-4.300-3-4.300 3 1.600-5L.7 5.800h5z" stroke="#444" strokeWidth="1.100" /><path d="M7.500 5v5M5 8l5 1M10 7l-4 3" stroke="#777" /></Svg>
        </AddressBox>
        <Spacer $w={10} />
        <IconButton $w={32} $bg="#dcdcdc" aria-label="Monitor 1">
          <Svg w={20} h={22}><path d="M0 3h20v16H0z" fill="#2b2b2b" /><text x="10" y="15" textAnchor="middle" fontSize="11" fontWeight="700" fontFamily={UI} fill="#fff">1</text><circle cx="10" cy="20.500" r="1.500" fill="#3d8ad8" /></Svg>
        </IconButton>
        <Spacer $w={2} />
        <IconButton aria-label="Transferir arquivos"><Svg w={15} h={19}><path d="M.7.700h9l4.500 4.500v13H.7zM3 9.500h8.500M8 6l3.700 3.500L8 13" stroke="#222" strokeWidth="1.200" /></Svg></IconButton>
        <Spacer $w={5} />
        <IconButton aria-label="Chat"><Svg w={21} h={20}><path d="M.7.700h19v14h-4.200v4l-4-4H.7zM4.500 5.500h12M4.500 9.500h8" stroke="#222" strokeWidth="1.200" /></Svg></IconButton>
        <IconButton aria-label="Ações"><Svg w={11} h={20}><path d="M4.500 0h4L6 7.500h4L2 19.500l2.500-9H1z" fill="#222" /></Svg></IconButton>
        <IconButton aria-label="Teclado"><Svg w={19} h={12}><path d="M.5.500h18v10.500H.5z" stroke="#222" strokeWidth="1.200" /><path d="M2.500 3h14M2.500 5.500h14" stroke="#222" strokeDasharray="1.500 1" strokeWidth="1.200" /><path d="M3 8.500h2M6.500 8.500h7M15 8.500h1.500" stroke="#222" /></Svg></IconButton>
        <IconButton aria-label="Exibição"><Monitor w={20} /></IconButton>
        <IconButton aria-label="Permissões"><Svg w={16} h={18}><path d="M.7.700h14.500v8c0 4-3.500 7-7.200 8.500C4.300 15.700.7 12.700.7 8.700zM8 .7v16M.7 8h14.500" stroke="#222" strokeWidth="1.200" /></Svg></IconButton>
        <IconButton aria-label="Desenhar"><Svg w={17} h={19}><path d="M1 17.500L1.500 13 6.500 1l3.500 1.500-5 12zM10.500 2.500l.5 2-2.500 6M3 18h13.500" stroke="#222" strokeWidth="1.200" /></Svg></IconButton>
        <IconButton aria-label="Gravar"><Monitor w={20} red /></IconButton>
        <Spacer />
        <IconButton $w={44} aria-label="Histórico"><Svg w={18}><path d="M2.500 5a7.700 7.700 0 11-1 5M1 2v4h4.500M9.500 5v5l3 3" stroke="#222" strokeWidth="1.200" /></Svg></IconButton>
        <IconButton $w={44} aria-label="Instalar"><Svg w={17} h={20}><path d="M.7.700h15.500v18H.7zM.7 15h15.500M5.500 8l3 3 3-3" stroke="#222" strokeWidth="1.300" /><circle cx="8.500" cy="5.500" r="1.300" fill="#222" /></Svg></IconButton>
        <IconButton $w={44} aria-label="Menu"><Svg w={17}><path d="M0 .5h17M0 5.500h17M0 10.500h17M0 15.500h17" stroke="#222" /></Svg></IconButton>
      </ToolStrip>
    </>
  );
}

function SelectBox({ id, w, label, value, plain }) {
  return (
    <SelectWrap $w={w}>
      <select id={id} aria-label={label} defaultValue={value}><option>{value}</option></select>
      <SelectArrow $plain={plain}><Chevron /></SelectArrow>
    </SelectWrap>
  );
}

function Forms() {
  return (
    <FormArea>
      <Panel>
        <FormRows>
          <FormRow>
            <Label htmlFor="prescricao">Prescrição</Label>
            <Field id="prescricao" $w={77} $cream />
            <IconButton $w={22} $h={18} aria-label="Buscar prescrição"><Hand /></IconButton>
            <Label htmlFor="pedido" $w={70}>Pedido</Label>
            <Field id="pedido" $w={77} />
            <IconButton $w={22} $h={18} aria-label="Buscar pedido"><Hand /></IconButton>
            <IconButton $w={18} $h={18} $bg="#cfcfcf" aria-label="Confirmar"><Svg w={14}><path d="M1.500 8l4 4L12.500 1.500" stroke="#8c8c8c" strokeWidth="2" /></Svg></IconButton>
            <Label htmlFor="unidade" $w={161} $big>Unidade de Estoque</Label>
            <Field id="unidade" $w={88} $cream defaultValue="5" />
          </FormRow>
          <FormRow>
            <Label htmlFor="data">Data</Label>
            <Field id="data" $w={77} defaultValue="20/08/2020" />
            <Label htmlFor="horario" $w={42}>Horário</Label>
            <Field id="horario" $w={56} defaultValue="17:26" />
            <Label htmlFor="tipo" $w={179}>Tipo</Label>
            <SelectBox id="tipo" w={182} value="1-Saida" plain />
          </FormRow>
          <FormRow>
            <Label htmlFor="custo">C. Custo</Label>
            <Field id="custo" $w={44} $right defaultValue="5" />
            <SelectBox w={491} label="Centro de custo" value="LABORATORIO" />
          </FormRow>
        </FormRows>
        <Barcode digits="138055651547" />
      </Panel>
      <Group>
        <legend>Prontuário</legend>
        <FormRows>
          <FormRow $h={18}>
            <Label htmlFor="cps">C.P.S</Label>
            <Field id="cps" $w={60} $right defaultValue="0" />
            <Spacer $w={1} />
            <IconButton $w={18} $h={17} $bg="#cfcfcf" aria-label="Agenda"><Grid /></IconButton>
            <Spacer $w={3} />
            <IconButton $w={18} $h={17} $bg="#cfcfcf" aria-label="Procurar"><Binoculars /></IconButton>
            <Caption $w={347}>Tipo</Caption>
          </FormRow>
          <FormRow $h={17}>
            <Caption>Admissão</Caption>
            <Caption $w={130}>Hora</Caption>
            <Caption $w={163}>CID</Caption>
            <Caption $w={155}>Codigo Principal</Caption>
            <Caption $w={37}>. &nbsp;. &nbsp; -</Caption>
          </FormRow>
          <FormRow $h={15}>
            <Caption>Convênio</Caption>
            <Caption $w={293}>Médico Responsável</Caption>
          </FormRow>
          <FormRow>
            <Label htmlFor="tratamento">Tratamento</Label>
            <Field id="tratamento" $w={44} $right $color="#00007f" $size={12} defaultValue="0" />
            <SelectBox w={491} label="Descrição do tratamento" value="" />
          </FormRow>
        </FormRows>
      </Group>
    </FormArea>
  );
}

function ItemsPanel() {
  const widths = [11, 63, 390, 62, 59, 55, 88, 86, 76, 30, 20, 18, 55];
  return (
    <Items>
      <Spacer />
      <ItemsTitle>
        <h2>Saidas de Itens Individuais</h2>
        <label>Dispensa Direto por Codigo de Barras <input type="checkbox" /></label>
      </ItemsTitle>
      <SideTools>
        <IconButton $w={20} $h={22} aria-label="Ajuda"><Help s={13} /></IconButton>
        <IconButton $w={20} $h={23} aria-label="Novo"><Svg w={14}><path d="M7 0v14M0 7h14M2 2l10 10M12 2L2 12" stroke="#d8d8d8" /><circle cx="7" cy="7" r="3" fill="#999" /></Svg></IconButton>
        <IconButton $w={20} $h={22} aria-label="Salvar"><Svg w={12} h={13}><path d="M0 0h12v13H0z" fill="#111" /><path d="M2 1h8v6H2zM4 9h5v3H4z" fill="#eee" /></Svg></IconButton>
        <IconButton $w={20} $h={23} aria-label="Excluir"><Svg w={12} h={14}><path d="M0 2h12v2H0zM4 0h4v2H4zM1 5h10l-1 9H2z" fill="#dcdcdc" /><path d="M4 5v8M6 5v8M8 5v8" stroke="#666" /></Svg></IconButton>
        <IconButton $w={20} $h={22} aria-label="Opções"><Svg w={14}><path d="M7 0v14M0 7h14M2 2l10 10M12 2L2 12" stroke="#e8e02a" strokeWidth="1.500" /><circle cx="7" cy="7" r="4.500" fill="#e8e02a" /><circle cx="7" cy="7" r="2.200" stroke="#6a6310" /></Svg></IconButton>
        <IconButton $w={20} $h={23} aria-label="Fórmula"><Svg w={9} h={13}><path d="M2.500.500h4M3.500 1v4.500M5.500 1v4.500" stroke="#ddd" /><circle cx="4.500" cy="8.500" r="3.500" fill="#2a5ce0" stroke="#cfd8f4" /></Svg></IconButton>
      </SideTools>
      <ItemsBody>
        <ItemsTable>
          <colgroup>{widths.map((w, i) => <col key={i} width={w} />)}</colgroup>
          <thead>
            <tr>
              <ItemTh colSpan={2}>&nbsp; &nbsp;Cod. Prod.</ItemTh>
              <ItemTh>Descrição do Produto</ItemTh>
              <ItemTh>Unidade</ItemTh>
              <ItemTh $num>Quant.</ItemTh>
              <ItemTh $num>Saldo</ItemTh>
              <ItemTh>Rastreabilidade</ItemTh>
              <ItemTh>Lote</ItemTh>
              <ItemTh>Validade</ItemTh>
              <ItemTh>Falta</ItemTh>
              <ItemTh>CT</ItemTh>
              <ItemTh>Alt:</ItemTh>
              <ItemTh>Prescritor</ItemTh>
            </tr>
          </thead>
          <tbody>
            <tr>
              <ItemTd $bg="#2063b0" $flush><Svg w={9} h={12}><path d="M2 .5h6M2 11.500h6M5 .5v11" stroke="#111" strokeWidth="1.500" /></Svg></ItemTd>
              <ItemTd $bg="#fff" $flush><CodeCell>293<button aria-label="Consultar produto"><Svg w={11} h={3}><path d="M1 0h2v2H1zM4.500 0h2v2h-2zM8 0h2v2H8z" fill="#111" /></Svg></button></CodeCell></ItemTd>
              <ItemTd $bold $small>LUVA PROCEDIMENTO LATEX TAMANHO M</ItemTd>
              <ItemTd $small>UNIDADE</ItemTd>
              <ItemTd $num>1</ItemTd>
              <ItemTd $num>0</ItemTd>
              <ItemTd /><ItemTd /><ItemTd /><ItemTd />
              <ItemTd $bg="#fff" /><ItemTd $bg="#fff" /><ItemTd />
            </tr>
          </tbody>
        </ItemsTable>
      </ItemsBody>
    </Items>
  );
}

function ProductDialog() {
  const widths = [10, 70, 259, 52, 105, 104, 105, 103, 16];
  return (
    <Dialog role="dialog" aria-label="Consulta a Produtos">
      <DialogTitle>
        Consulta a Produtos
        <IconButton $w={26} $h={20} aria-label="Fechar consulta"><Close s={9} /></IconButton>
      </DialogTitle>
      <SearchBar>
        <input type="text" aria-label="Produto" defaultValue="luva" />
        <CheckLabel><CheckBox defaultChecked />Somente Ativos</CheckLabel>
        <PartialSearch>
          Buscar por Nome...
          <CheckLabel><CheckBox defaultChecked />Busca Parcial</CheckLabel>
        </PartialSearch>
      </SearchBar>
      <TabRow $h={35} $end>
        <Tab $on $w={110}>Nome Cadastrado</Tab>
        <Tab $w={89}>Principio Ativo</Tab>
        <Tab $w={54}>Mini Def</Tab>
      </TabRow>
      <TableFrame>
        <ProductTable>
          <colgroup>{widths.map((w, i) => <col key={i} width={w} />)}</colgroup>
          <thead>
            <tr>
              <th aria-label="Marcador" /><th>Codigo</th><th>Descrição</th><th>Unidade</th><th>Laboratorio</th><th>CAF</th><th>Almoxarifado</th><th>Farmacia SAtelite</th><th>Nu</th>
            </tr>
          </thead>
          <tbody>
            {PRODUCTS.map(([code, name, unit, ...stock]) => (
              <ProductRow key={code} $on={code === SELECTED}>
                <td>{code === SELECTED && <Svg w={6} h={8}><path d="M0 0l6 4-6 4z" fill="#000" /></Svg>}</td>
                <NumCell>{code}</NumCell>
                <TextCell>{name}</TextCell>
                <TextCell>{unit}</TextCell>
                {stock.map((n, i) => <NumCell key={i}>{n}</NumCell>)}
                <td />
              </ProductRow>
            ))}
          </tbody>
        </ProductTable>
        <ScrollTrack>
          <IconButton $w={14} $h={16} aria-label="Rolar para cima"><Chevron up w={8} /></IconButton>
          <ScrollThumb />
        </ScrollTrack>
      </TableFrame>
    </Dialog>
  );
}

function RemoteTaskBar() {
  const blue = "#76b9ed";
  return (
    <TaskBar $small>
      <TaskItem $w={42} aria-label="Iniciar"><Win s={15} /></TaskItem>
      <SearchField $small><SearchIcon c="#333" /><input placeholder="Digite aqui para pesquisar" aria-label="Pesquisar no computador remoto" /></SearchField>
      <TaskItem $w={43} aria-label="Visão de tarefas"><TaskView c="#ddd" /></TaskItem>
      <TaskItem $w={42} aria-label="Chrome"><Chrome s={19} /></TaskItem>
      <TaskItem $w={42} aria-label="Calculadora"><Calc s={15} /></TaskItem>
      <TaskItem $w={42} aria-label="Arquivos"><Folder s={19} /></TaskItem>
      <TaskItem $w={43} $open={blue} aria-label="Farmácia"><Syringe s={21} /></TaskItem>
      <TaskItem $w={42} aria-label="Edge"><EdgeIcon /></TaskItem>
      <TaskItem $w={42} aria-label="Notas"><Note /></TaskItem>
      <TaskItem $w={42} $open={blue} aria-label="PowerPoint"><Ppt /></TaskItem>
      <TaskItem $w={43} $open={blue} aria-label="Caveira"><Skull /></TaskItem>
      <TaskItem $w={42} $open={blue} aria-label="AnyDesk remoto"><AnyTile s={21} /></TaskItem>
      <TaskItem $w={42} $on $open={blue} aria-label="Estoque"><AppE s={21} /></TaskItem>
      <Spacer />
      <IconButton $w={20} $h={34} aria-label="Ícones ocultos"><Chevron up c="#fff" w={11} /></IconButton>
      <IconButton $w={21} $h={34} aria-label="Rede"><Net /></IconButton>
      <IconButton $w={21} $h={34} aria-label="Som"><Sound /></IconButton>
      <Clock $small><span>17:27</span><span>20/08/2020</span></Clock>
      <IconButton $w={37} $h={34} aria-label="Notificações"><Notice n="2" s={22} /></IconButton>
    </TaskBar>
  );
}

function LocalTaskBar() {
  const mint = "#7fb8ab";
  return (
    <TaskBar>
      <TaskItem $w={48} aria-label="Iniciar"><Win /></TaskItem>
      <SearchField><SearchIcon c="#ddd" /><input placeholder="Digite aqui para pesquisar" aria-label="Pesquisar" /></SearchField>
      <TaskItem $w={48} aria-label="Cortana"><Svg w={16}><circle cx="8" cy="8" r="6.700" stroke="#fff" strokeWidth="2" /></Svg></TaskItem>
      <TaskItem $w={49} aria-label="Visão de tarefas"><TaskView /></TaskItem>
      <TaskItem $w={50} aria-label="Calculadora"><Calc /></TaskItem>
      <TaskItem $w={49} aria-label="Ferramenta de captura"><Snip /></TaskItem>
      <TaskItem $w={49} $open={mint} aria-label="Chrome"><Chrome s={22} /></TaskItem>
      <TaskItem $w={49} aria-label="Firefox"><Firefox /></TaskItem>
      <TaskItem $w={49} $open={mint} aria-label="Arquivos"><Folder s={22} /></TaskItem>
      <TaskItem $w={49} $on $open={mint} aria-label="AnyDesk"><AnyTile s={24} /></TaskItem>
      <TaskItem $w={49} $open={mint} aria-label="Farmácia"><Syringe s={24} /></TaskItem>
      <Spacer />
      <IconButton $w={24} $h={40} aria-label="Ícones ocultos"><Chevron up c="#fff" w={12} /></IconButton>
      <IconButton $w={24} $h={40} aria-label="Atualização"><Sync /></IconButton>
      <IconButton $w={24} $h={40} aria-label="Rede"><Net /></IconButton>
      <IconButton $w={24} $h={40} aria-label="Som"><Sound /></IconButton>
      <Clock><span>17:27</span><span>20/08/2020</span></Clock>
      <IconButton $w={49} $h={40} aria-label="Notificações"><Notice n="12" /></IconButton>
    </TaskBar>
  );
}

export default function App() {
  return (
    <>
      <GlobalStyle />
      <AnyDeskChrome />
      <Stage>
        <Remote>
          <AppTitle>
            <AppE s={14} />
            Sistema de Estoque - CICC - CAMAÇARI - [Cadastro de Saidas]
            <Spacer />
            <IconButton $w={35} $h={18} aria-label="Minimizar sistema"><Minimize c="#aaa" /></IconButton>
            <IconButton $w={35} $h={18} aria-label="Restaurar sistema"><Restore c="#999" s={9} /></IconButton>
            <IconButton $w={36} $h={18} aria-label="Fechar sistema"><Close s={9} c="#888" /></IconButton>
          </AppTitle>
          <MenuBar>
            <AppE />
            <button>Cadastros</button><button>Movimentação</button><button>Relatórios</button><button>Utilitários</button><button>Ajuda</button>
            <MdiButtons>
              <IconButton $w={15} $h={15} $bg="#e4e4e4" aria-label="Minimizar janela"><Svg w={7}><path d="M1 6h5" stroke="#8795a5" strokeWidth="1.500" /></Svg></IconButton>
              <IconButton $w={15} $h={15} $bg="#e4e4e4" aria-label="Restaurar janela"><Restore s={7} c="#8795a5" /></IconButton>
              <IconButton $w={15} $h={15} $bg="#e4e4e4" aria-label="Fechar janela"><Svg w={7}><path d="M1 1l5 5M6 1L1 6" stroke="#7c8a99" strokeWidth="1.700" /></Svg></IconButton>
            </MdiButtons>
          </MenuBar>
          <BannerRow>
            <Banner>
              <Temple />
              <div><h1>Saidas de Produtos</h1><p>CopyRight© GA Informática</p></div>
            </Banner>
            <Tools>
              <IconButton $w={40} aria-label="Voltar"><Svg w={14} h={10}><path d="M0 5l6-4.500v3h7.500v3H6v3z" fill="#e01b1b" stroke="#3a0b0b" /></Svg></IconButton>
              <IconButton $w={26} aria-label="Transferir"><Svg w={14}><path d="M.5 2h4v4h-4zM7 1.500h4v4M8.500 4L11 6.500 13.500 4M5 8h4v3H5zM2 13l2.500-3L6 13zM9 10h4v3H8z" stroke="#8f8f8f" /></Svg></IconButton>
              <IconButton $w={40} aria-label="Estrutura"><TreeIcon /></IconButton>
              <Spacer $w={24} />
              <IconButton $w={42} aria-label="Volume"><BoxIcon /></IconButton>
              <IconButton $w={26} aria-label="Consultar documentos"><Papers /></IconButton>
              <IconButton $w={34} aria-label="Ampliar"><Zoom /></IconButton>
              <IconButton $w={32} aria-label="Correio"><Sphere /></IconButton>
              <IconButton $w={35} aria-label="SMS"><Phone /></IconButton>
              <GaLogo />
            </Tools>
          </BannerRow>
          <Body>
            <BodyMain>
              <NumberBar>
                <label htmlFor="numero">Número</label>
                <Field id="numero" $w={76} $right $cream defaultValue="27325" />
                <IconButton $w={18} $h={18} aria-label="Buscar número"><Hand /></IconButton>
                <Spacer />
                <IconButton $w={20} $h={18} aria-label="Ajuda do cadastro"><Help /></IconButton>
                <IconButton $w={18} $h={18} aria-label="Segurança"><Help s={13} lock /></IconButton>
              </NumberBar>
              <Forms />
              <ItemsPanel />
            </BodyMain>
            <EdgeLine />
          </Body>
          <TabRow $h={37} $left={3}>
            <Tab $on $w={102}>Itens Individuais</Tab>
            <Tab $w={30}>Kits</Tab>
          </TabRow>
          <NavBlock>
            <div>
              <NavTitle>Navegando...</NavTitle>
              <NavButtons>
                <NavButton aria-label="Primeiro"><NavArrow left bar /></NavButton>
                <NavButton aria-label="Anterior"><NavArrow left /></NavButton>
                <NavButton aria-label="Próximo"><NavArrow /></NavButton>
                <NavButton aria-label="Último"><NavArrow bar /></NavButton>
              </NavButtons>
            </div>
            <LabelButton>Etiqueta Paciente</LabelButton>
          </NavBlock>
          <TabRow $h={37}>
            <Tab $on $w={43}>Ficha</Tab>
            <Tab $w={125}>Lista Ultimas Saidas</Tab>
          </TabRow>
          <StatusBar><span>Usuário:147 LORRANA ALVES C</span><span>CopyRight© GA Informática - Versão: 2.0.0.87,</span></StatusBar>
          <DialogShadow />
          <RemoteTaskBar />
          <ProductDialog />
        </Remote>
        <SideHandle />
      </Stage>
      <LocalTaskBar />
    </>
  );
}
